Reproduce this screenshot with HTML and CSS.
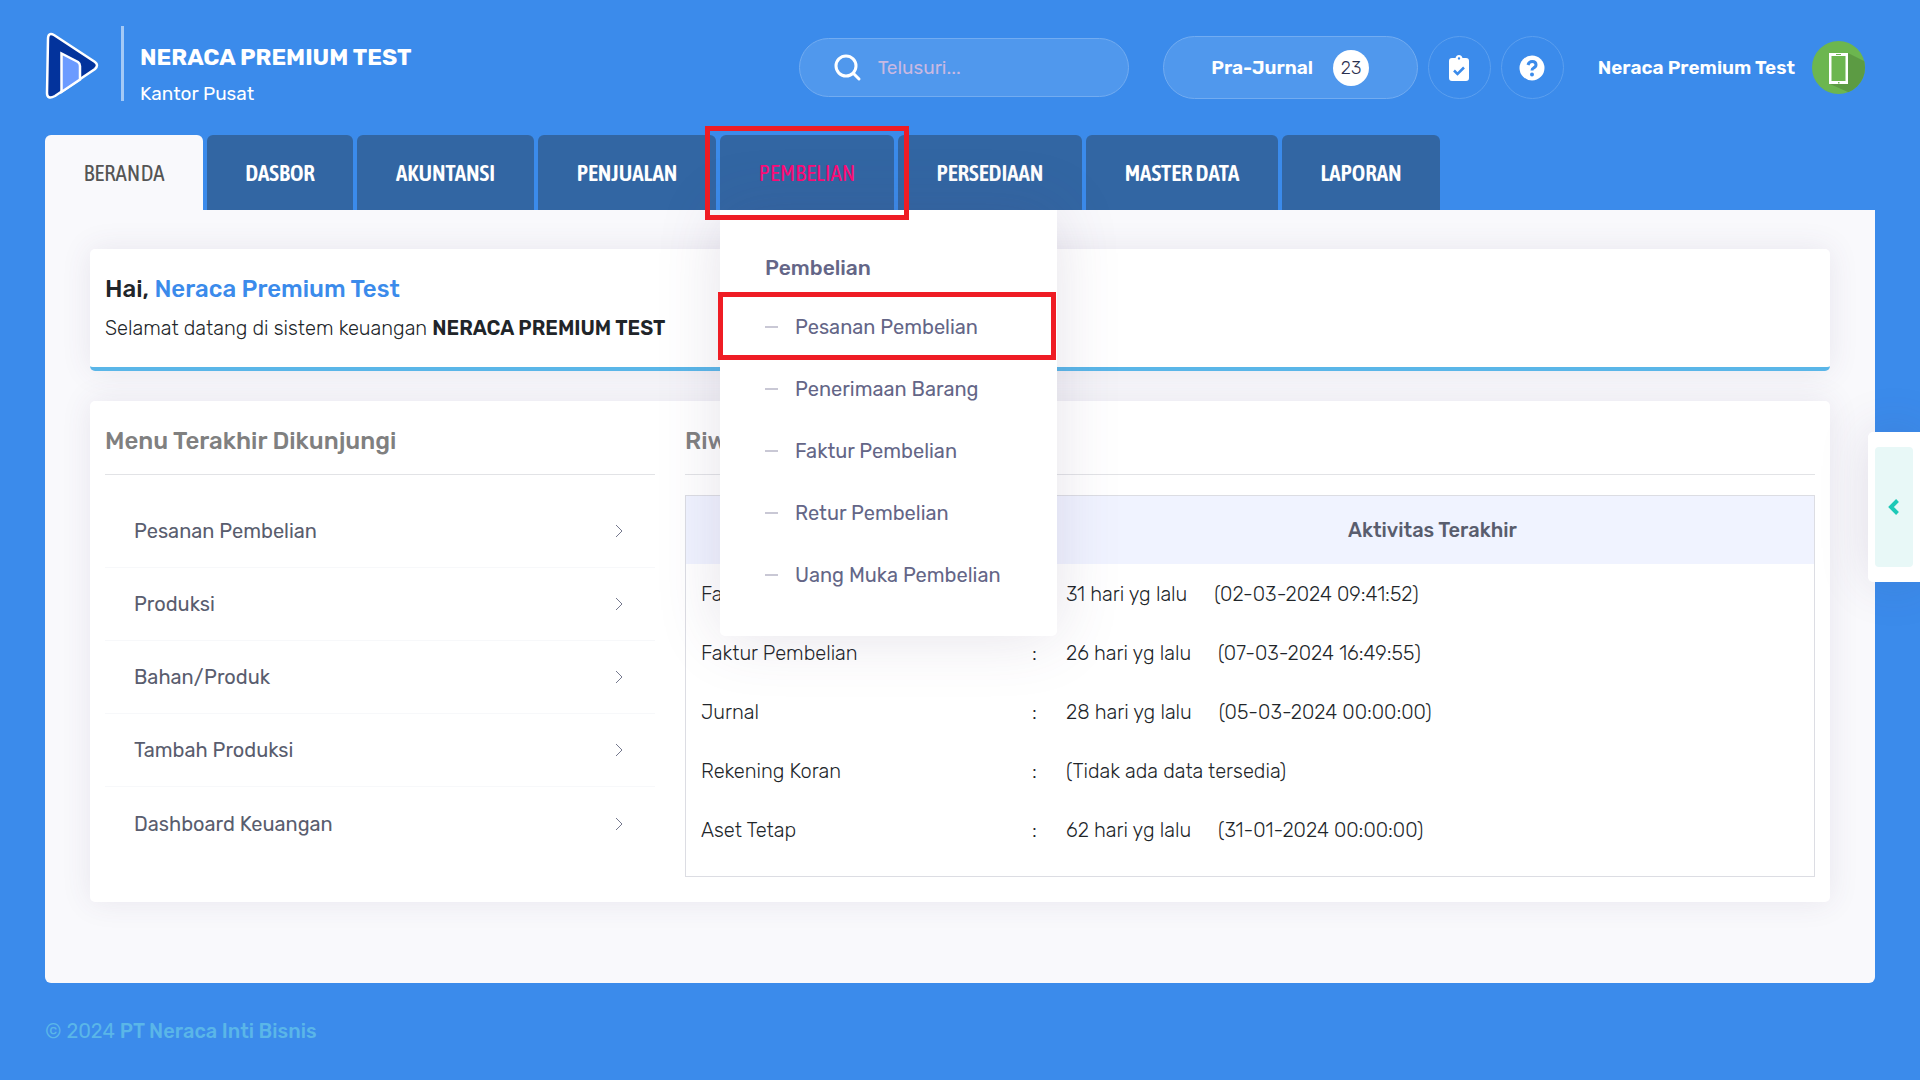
FILE: index.html
```html
<!DOCTYPE html>
<html lang="id">
<head>
<meta charset="utf-8">
<title>Neraca Premium Test</title>
<link rel="stylesheet" href="styles.css">
</head>
<body>
<header class="header">
  <a class="brand" href="#" aria-label="Neraca">
    <svg width="54" height="68" viewBox="0 0 54 68">
      <path d="M3 7Q3 0 9 3L50 30Q54 33 50 37L10 64Q2 68 2 61Z" fill="#03339c" stroke="#fff" stroke-width="2.5"/>
      <path d="M16.500 60V21.500L33 30Q35 31.500 35 34V47.500Z" fill="#6c9bff" stroke="#fff" stroke-width="2.5"/>
    </svg>
  </a>
  <div class="company">
    <h1 class="company-name">NERACA PREMIUM TEST</h1>
    <p class="company-branch">Kantor Pusat</p>
  </div>
  <div class="tools">
    <label class="search">
      <svg width="28" height="28" viewBox="0 0 28 28" fill="none" stroke="#fff" stroke-width="3" stroke-linecap="round"><circle cx="12" cy="12" r="10"/><path d="M19.500 19.500L25 25"/></svg>
      <input type="text" placeholder="Telusuri..." aria-label="Telusuri">
    </label>
    <button class="journal" type="button">Pra-Jurnal <span class="badge">23</span></button>
    <button class="round" type="button" aria-label="Tugas">
      <svg width="20" height="26" viewBox="0 0 20 26"><path fill="#fff" fill-rule="evenodd" d="M3 3H6.500C7 1 8.300 0 10 0S13 1 13.500 3H17Q20 3 20 6V23Q20 26 17 26H3Q0 26 0 23V6Q0 3 3 3ZM10 2.200A1.200 1.200 0 1 0 10 4.600A1.200 1.200 0 1 0 10 2.200Z"/><path d="M5 15.500L8.500 19L15 12.500" fill="none" stroke="#3b8beb" stroke-width="2.500"/></svg>
    </button>
    <button class="round" type="button" aria-label="Bantuan">
      <svg width="26" height="26" viewBox="0 0 26 26"><circle cx="13" cy="13" r="12.500" fill="#fff"/><path d="M9 10Q10 6.500 13.200 6.500Q17 6.500 17 9.800Q17 12 14.500 13Q13 13.700 13 15.500" fill="none" stroke="#3b8beb" stroke-width="3"/><circle cx="13" cy="19.500" r="2" fill="#3b8beb"/></svg>
    </button>
    <a class="user" href="#">Neraca Premium Test
      <svg width="53" height="53" viewBox="0 0 53 53"><defs><clipPath id="disc"><circle cx="26.500" cy="26.500" r="26.500"/></clipPath></defs><g clip-path="url(#disc)"><path fill="#6cb64f" d="M0 0H53V53H0Z"/><path fill="#5c9b43" d="M36 12L56 22V60L18 43L36 43Z"/><path fill="#fff" fill-rule="evenodd" d="M17 12H36V43H17ZM19.500 15V40H33.500V15Z"/><path fill="#6cb64f" d="M24 13H29V14H24ZM26 41H27.500V42.500H26Z"/></g></svg>
    </a>
  </div>
</header>
<nav class="nav">
  <ul class="tabs">
    <li class="tab"><a class="tab-link tab-active" href="#">BERANDA</a></li>
    <li class="tab"><a class="tab-link" href="#">DASBOR</a></li>
    <li class="tab"><a class="tab-link" href="#">AKUNTANSI</a></li>
    <li class="tab"><a class="tab-link" href="#">PENJUALAN</a></li>
    <li class="tab tab-open"><a class="tab-link tab-hover" href="#">PEMBELIAN</a>
      <div class="menu">
        <h2 class="menu-title">Pembelian</h2>
        <a class="menu-item menu-marked" href="#">Pesanan Pembelian</a>
        <a class="menu-item" href="#">Penerimaan Barang</a>
        <a class="menu-item" href="#">Faktur Pembelian</a>
        <a class="menu-item" href="#">Retur Pembelian</a>
        <a class="menu-item" href="#">Uang Muka Pembelian</a>
      </div>
    </li>
    <li class="tab"><a class="tab-link" href="#">PERSEDIAAN</a></li>
    <li class="tab"><a class="tab-link" href="#">MASTER DATA</a></li>
    <li class="tab"><a class="tab-link" href="#">LAPORAN</a></li>
  </ul>
</nav>
<main class="panel">
  <section class="card welcome">
    <h2 class="greeting">Hai, <span class="greeting-name">Neraca Premium Test</span></h2>
    <p class="welcome-text">Selamat datang di sistem keuangan <strong>NERACA PREMIUM TEST</strong></p>
  </section>
  <div class="card overview">
    <section class="recent">
      <h2 class="section-title">Menu Terakhir Dikunjungi</h2>
      <ul class="links">
        <li><a class="link" href="#">Pesanan Pembelian<svg class="chevron" viewBox="0 0 8 14"><path d="M1 1L7 7L1 13"/></svg></a></li>
        <li><a class="link" href="#">Produksi<svg class="chevron" viewBox="0 0 8 14"><path d="M1 1L7 7L1 13"/></svg></a></li>
        <li><a class="link" href="#">Bahan/Produk<svg class="chevron" viewBox="0 0 8 14"><path d="M1 1L7 7L1 13"/></svg></a></li>
        <li><a class="link" href="#">Tambah Produksi<svg class="chevron" viewBox="0 0 8 14"><path d="M1 1L7 7L1 13"/></svg></a></li>
        <li><a class="link" href="#">Dashboard Keuangan<svg class="chevron" viewBox="0 0 8 14"><path d="M1 1L7 7L1 13"/></svg></a></li>
      </ul>
    </section>
    <section class="history">
      <h2 class="section-title">Riwayat</h2>
      <div class="table-frame">
        <table class="table">
          <thead><tr><th class="col-name">Menu</th><th class="col-colon"></th><th>Aktivitas Terakhir</th></tr></thead>
          <tbody>
            <tr><td>Faktur</td><td>:</td><td><span class="ago">31 hari yg lalu</span>(02-03-2024 09:41:52)</td></tr>
            <tr><td>Faktur Pembelian</td><td>:</td><td><span class="ago">26 hari yg lalu</span>(07-03-2024 16:49:55)</td></tr>
            <tr><td>Jurnal</td><td>:</td><td><span class="ago">28 hari yg lalu</span>(05-03-2024 00:00:00)</td></tr>
            <tr><td>Rekening Koran</td><td>:</td><td>(Tidak ada data tersedia)</td></tr>
            <tr><td>Aset Tetap</td><td>:</td><td><span class="ago">62 hari yg lalu</span>(31-01-2024 00:00:00)</td></tr>
          </tbody>
        </table>
      </div>
    </section>
  </div>
</main>
<footer class="footer">© 2024 <a class="footer-link" href="#">PT Neraca Inti Bisnis</a></footer>
<aside class="drawer">
  <button class="drawer-button" type="button" aria-label="Buka panel"><svg width="12" height="18" viewBox="0 0 12 18"><path d="M9.500 2.500L3 9L9.500 15.500" fill="none" stroke="#1dc9b7" stroke-width="4"/></svg></button>
</aside>
</body>
</html>
```
FILE: styles.css
```css
* { box-sizing: border-box; }
body {
  margin: 0;
  background: #3b8beb;
  color: #212529;
  font: 400 20px/28px Rubik, Inter, sans-serif;
}
h1, h2, p, ul { margin: 0; padding: 0; }
ul { list-style: none; }
a { color: inherit; text-decoration: none; }
button, input { font: inherit; color: inherit; }

.header { display: flex; align-items: center; height: 135px; padding: 0 55px 0 45px; color: #fff; }
.brand { display: flex; margin-bottom: 4px; }
.company { display: flex; flex-direction: column; gap: 8px; height: 75px; margin: 0 0 8px 22px; padding: 17px 0 0 16px; border-left: 3px solid #a3c9f6; }
.company-name { font-size: 23px; font-weight: 700; line-height: 28px; white-space: nowrap; }
.company-branch { font-size: 19px; line-height: 30px; }
.tools { display: flex; align-items: center; gap: 10px; margin-left: auto; font-size: 19px; }
.search { display: flex; align-items: center; gap: 16px; width: 330px; height: 59px; margin-right: 24px; padding: 0 34px; border: 1px solid #72acf1; border-radius: 30px; background: #5098ed; }
.search svg { flex: none; }
.search input { width: 100%; min-width: 0; padding: 0; border: 0; outline: 0; background: none; }
.search input::placeholder { color: #c9b9e2; opacity: 1; }
.journal { display: flex; align-items: center; justify-content: center; gap: 20px; width: 255px; height: 63px; border: 1px solid #72acf1; border-radius: 32px; background: #5098ed; font-weight: 600; }
.badge { width: 36px; height: 36px; border-radius: 50%; background: #fff; color: #2b3050; font-size: 18px; font-weight: 300; line-height: 36px; }
.round { display: flex; align-items: center; justify-content: center; width: 63px; height: 63px; padding: 0; border: 1px solid #5b9fef; border-radius: 50%; background: none; }
.user { display: flex; align-items: center; gap: 17px; margin-left: 24px; font-weight: 600; white-space: nowrap; }

.nav { position: relative; z-index: 1; padding: 0 45px; }
.tabs { display: grid; grid-template-columns: 158px 146px 177px 178px 174px 184px 192px 158px; gap: 4px; }
.tab { position: relative; height: 75px; }
.tab-open { z-index: 1; }
.tab-open::after { content: ""; position: absolute; inset: -9px -15px -10px; border: 5px solid #ef1c24; pointer-events: none; }
.tab-link { display: flex; align-items: center; justify-content: center; height: 100%; border-radius: 6px 6px 0 0; background: #3266a3; color: #fff; font: 600 23px/28px "Asap Condensed", "Liberation Sans Narrow", "DejaVu Sans Condensed", sans-serif; }
.tab-active { background: #f9f9fc; color: #555; font-weight: 400; }
.tab-hover { color: #fd0b76; font-weight: 400; }

.menu { position: absolute; top: 100%; left: 0; width: 337px; padding: 31px 0; border-radius: 0 0 5px 5px; background: #fff; box-shadow: 0 0 65px rgba(82, 63, 105, .15); color: #646687; }
.menu-title { padding: 13px 45px; font-size: 21px; font-weight: 500; line-height: 28px; }
.menu-item { display: flex; align-items: center; gap: 17px; position: relative; height: 62px; padding: 1px 45px 0; white-space: nowrap; }
.menu-item::before { content: ""; width: 13px; height: 2px; background: #c9c8d5; }
.menu-marked::after { content: ""; position: absolute; inset: -3px 1px -3px -2px; border: 5px solid #ef1c24; }

.panel { display: flex; flex-direction: column; gap: 30px; margin: 0 45px; padding: 39px 45px 81px; border-radius: 0 0 6px 6px; background: #f9f9fc; }
.card { border-radius: 5px; background: #fff; box-shadow: 0 0 30px rgba(82, 63, 105, .1); }
.welcome { padding: 25px 15px; border-bottom: 4px solid #5ab6e8; }
.greeting { font-size: 24px; font-weight: 500; line-height: 30px; }
.greeting-name { color: #3b8beb; }
.welcome-text { padding-top: 10px; font-weight: 300; line-height: 28px; }
.welcome-text strong { font-weight: 600; }
.overview { display: grid; grid-template-columns: 550px 1fr; gap: 30px; padding: 20px 15px 25px; }
.section-title { height: 54px; border-bottom: 1px solid #e2e3e6; color: #808080; font-size: 24px; font-weight: 500; line-height: 40px; }
.links { padding-top: 20px; }
.link { display: flex; align-items: center; justify-content: space-between; height: 73px; padding: 0 32px 0 29px; border-bottom: 1px solid #f7f8fa; color: #595d6e; }
.links li:last-child .link { border-bottom: 0; }
.chevron { width: 8px; height: 14px; fill: none; stroke: #74788d; stroke-width: 1; }
.table-frame { margin-top: 20px; padding-bottom: 17px; border: 1px solid #dcdde3; }
.table { width: 100%; border-collapse: collapse; table-layout: fixed; font-weight: 300; }
.col-name { width: 334px; }
.col-colon { width: 31px; }
.table th { height: 68px; padding: 0 15px; background: #f0f3ff; color: #595d6e; font-weight: 500; }
.table td { height: 59px; padding: 0 15px; white-space: nowrap; }
.table td:nth-child(2) { padding: 0 12px; }
.ago { margin-right: 27px; }

.footer { padding: 34px 45px 35px; color: #5ab6e8; }
.footer-link { font-weight: 500; }
.drawer { position: fixed; z-index: 2; top: 432px; right: 0; width: 52px; padding: 15px 7px; border-radius: 5px 0 0 5px; background: #fff; box-shadow: 0 0 50px rgba(82, 63, 105, .15); }
.drawer-button { display: flex; align-items: center; justify-content: center; width: 38px; height: 120px; padding: 0; border: 0; border-radius: 4px; background: #e8f8f7; }
```
